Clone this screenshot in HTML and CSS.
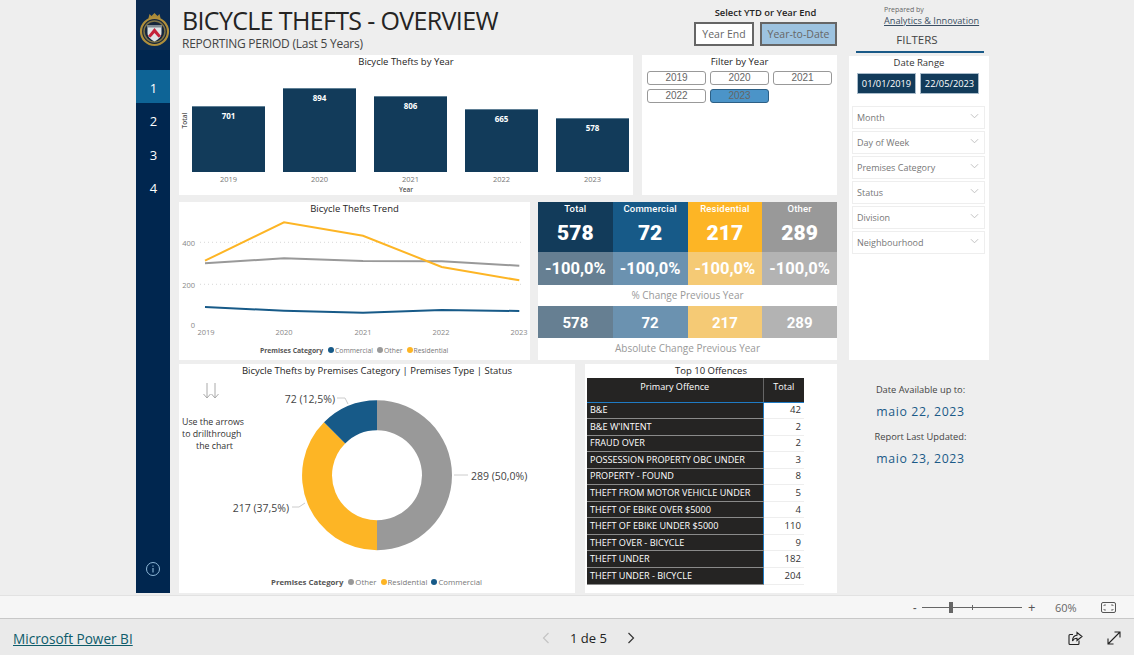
FILE: index.html
```html
<!DOCTYPE html>
<html lang="en">
<head>
    <meta charset="UTF-8">
    <meta name="viewport" content="width=device-width, initial-scale=1.0">
    <title>Bicycle Thefts - Overview</title>
    <link rel="stylesheet" href="styles.css">
</head>
<body>
    <div class="report">
        <nav class="sidebar">
            <div class="logo">
                <svg width="34" height="50" viewBox="0 0 34 50">
                    <path d="M12.500 18 l1-4 l2 2 l3-3 l3 3 l2-2 l1 4 z" fill="#a98a3a"/>
                    <circle cx="18.500" cy="31.500" r="13.500" fill="#16263c" stroke="#b08f3c" stroke-width="2.200"/>
                    <circle cx="18.500" cy="31.500" r="10.500" fill="none" stroke="#7f7345" stroke-width="1.500"/>
                    <path d="M11.500 25 h14 v8 c0 4-3.500 6.500-7 8.500 c-3.500-2-7-4.500-7-8.500 z" fill="#dfe3e6"/>
                    <path d="M11.500 25 h14 v2.500 h-14 z" fill="#7f8a93"/>
                    <path d="M12 36 l6.500-8 l6.500 8 l-2.500 1.500 l-4-4.500 l-4 4.500 z" fill="#c4213a"/>
                </svg>
            </div>
            <div class="nav-list">
                <div class="nav-item active">1</div>
                <div class="nav-item">2</div>
                <div class="nav-item">3</div>
                <div class="nav-item">4</div>
            </div>
            <div class="info">
                <svg width="16" height="16" viewBox="0 0 16 16">
                    <circle cx="8" cy="8" r="6.500" fill="none" stroke="#8fb8d8" stroke-width="1"/>
                    <path d="M8 7 v4.500 M8 4.500 v1.200" stroke="#8fb8d8" stroke-width="1.100"/>
                </svg>
            </div>
        </nav>

        <main class="main">
            <header class="page-header">
                <div class="page-titles">
                    <h1>BICYCLE THEFTS - OVERVIEW</h1>
                    <p>REPORTING PERIOD (Last 5 Years)</p>
                </div>
                <div class="mode-select">
                    <div class="mode-label">Select YTD or Year End</div>
                    <div class="mode-buttons">
                        <div class="mode-btn year-end">Year End</div>
                        <div class="mode-btn ytd">Year-to-Date</div>
                    </div>
                </div>
            </header>

            <section class="row row-one">
                <div class="tile bar-tile">
                    <div class="tile-title">Bicycle Thefts by Year</div>
                    <div class="axis-name-y">Total</div>
                    <div class="bars">
                        <div class="bar" style="height: 66px">701</div>
                        <div class="bar" style="height: 84px">894</div>
                        <div class="bar" style="height: 76px">806</div>
                        <div class="bar" style="height: 63px">665</div>
                        <div class="bar" style="height: 54px">578</div>
                    </div>
                    <div class="bar-years">
                        <span>2019</span><span>2020</span><span>2021</span><span>2022</span><span>2023</span>
                    </div>
                    <div class="axis-name-x">Year</div>
                </div>
                <div class="tile year-filter">
                    <div class="tile-title">Filter by Year</div>
                    <div class="chips">
                        <div class="chip">2019</div>
                        <div class="chip">2020</div>
                        <div class="chip">2021</div>
                        <div class="chip">2022</div>
                        <div class="chip selected">2023</div>
                    </div>
                </div>
            </section>

            <section class="row row-two">
                <div class="tile trend-tile">
                    <div class="tile-title">Bicycle Thefts Trend</div>
                    <svg class="trend-chart" width="351" height="126" viewBox="0 0 351 126">
                        <line class="grid" x1="21" y1="26.300" x2="345" y2="26.300"/>
                        <line class="grid" x1="21" y1="68.300" x2="345" y2="68.300"/>
                        <text class="tick" x="16" y="29.500" text-anchor="end">400</text>
                        <text class="tick" x="16" y="71.500" text-anchor="end">200</text>
                        <text class="tick" x="16" y="112" text-anchor="end">0</text>
                        <polyline class="line" stroke="#999999" points="26,47.300 105,42.300 184,45 262.700,45.300 340.300,49.700"/>
                        <polyline class="line" stroke="#fdb525" points="26,44.700 105,6.300 184,19.700 262.700,51 340.300,64.300"/>
                        <polyline class="line" stroke="#175a88" points="26,91 105,94.700 184,96.700 262.700,94 340.300,95"/>
                        <text class="tick" x="27" y="119" text-anchor="middle">2019</text>
                        <text class="tick" x="105" y="119" text-anchor="middle">2020</text>
                        <text class="tick" x="184" y="119" text-anchor="middle">2021</text>
                        <text class="tick" x="262" y="119" text-anchor="middle">2022</text>
                        <text class="tick" x="340" y="119" text-anchor="middle">2023</text>
                    </svg>
                    <div class="legend">
                        <b>Premises Category</b>
                        <span><i class="dot blue"></i>Commercial</span>
                        <span><i class="dot grey"></i>Other</span>
                        <span><i class="dot amber"></i>Residential</span>
                    </div>
                </div>

                <div class="tile kpi-tile">
                    <div class="kpi-grid">
                        <div class="kpi total"><span>Total</span><strong>578</strong></div>
                        <div class="kpi commercial"><span>Commercial</span><strong>72</strong></div>
                        <div class="kpi residential"><span>Residential</span><strong>217</strong></div>
                        <div class="kpi other"><span>Other</span><strong>289</strong></div>
                        <div class="pct total-soft">-100,0%</div>
                        <div class="pct commercial-soft">-100,0%</div>
                        <div class="pct residential-soft">-100,0%</div>
                        <div class="pct other-soft">-100,0%</div>
                        <div class="kpi-caption">% Change Previous Year</div>
                        <div class="abs total-soft">578</div>
                        <div class="abs commercial-soft">72</div>
                        <div class="abs residential-soft">217</div>
                        <div class="abs other-soft">289</div>
                        <div class="kpi-caption">Absolute Change Previous Year</div>
                    </div>
                </div>
            </section>

            <section class="row row-three">
                <div class="tile donut-tile">
                    <div class="tile-title">Bicycle Thefts by Premises Category | Premises Type | Status</div>
                    <svg class="donut-chart" width="396" height="196" viewBox="0 0 396 196">
                        <path class="arrow" d="M28 5 v15 M24.500 16 l3.500 4 l3.500-4 M36 5 v15 M32.500 16 l3.500 4 l3.500-4"/>
                        <text class="hint" x="3" y="46.500">Use the arrows</text>
                        <text class="hint" x="3" y="59">to drillthrough</text>
                        <text class="hint" x="17" y="71">the chart</text>
                        <path fill="#999999" d="M198 22.300 A75 75 0 0 1 198 172.300 L198 142.300 A45 45 0 0 0 198 52.300 Z"/>
                        <path fill="#fdb525" d="M198 172.300 A75 75 0 0 1 145 44.300 L166.200 65.500 A45 45 0 0 0 198 142.300 Z"/>
                        <path fill="#175a88" d="M145 44.300 A75 75 0 0 1 198 22.300 L198 52.300 A45 45 0 0 0 166.200 65.500 Z"/>
                        <path class="leader" d="M158 20 h8 l3 6 M275 97 h14 M113 129 h7 l6-4"/>
                        <text class="slice-label" x="156" y="25" text-anchor="end">72 (12,5%)</text>
                        <text class="slice-label" x="292" y="102">289 (50,0%)</text>
                        <text class="slice-label" x="110" y="134" text-anchor="end">217 (37,5%)</text>
                    </svg>
                    <div class="legend donut-legend">
                        <b>Premises Category</b>
                        <span><i class="dot grey"></i>Other</span>
                        <span><i class="dot amber"></i>Residential</span>
                        <span><i class="dot blue"></i>Commercial</span>
                    </div>
                </div>

                <div class="tile offences-tile">
                    <div class="tile-title">Top 10 Offences</div>
                    <table class="offences">
                        <thead>
                            <tr><th>Primary Offence</th><th>Total</th></tr>
                        </thead>
                        <tbody>
                            <tr><td>B&amp;E</td><td>42</td></tr>
                            <tr><td>B&amp;E W'INTENT</td><td>2</td></tr>
                            <tr><td>FRAUD OVER</td><td>2</td></tr>
                            <tr><td>POSSESSION PROPERTY OBC UNDER</td><td>3</td></tr>
                            <tr><td>PROPERTY - FOUND</td><td>8</td></tr>
                            <tr><td>THEFT FROM MOTOR VEHICLE UNDER</td><td>5</td></tr>
                            <tr><td>THEFT OF EBIKE OVER $5000</td><td>4</td></tr>
                            <tr><td>THEFT OF EBIKE UNDER $5000</td><td>110</td></tr>
                            <tr><td>THEFT OVER - BICYCLE</td><td>9</td></tr>
                            <tr><td>THEFT UNDER</td><td>182</td></tr>
                            <tr><td>THEFT UNDER - BICYCLE</td><td>204</td></tr>
                        </tbody>
                    </table>
                </div>
            </section>
        </main>

        <aside class="filters">
            <div class="prepared">
                <small>Prepared by</small>
                <a href="#">Analytics &amp; Innovation</a>
            </div>
            <div class="filters-title">FILTERS</div>
            <div class="filters-panel">
                <div class="date-title">Date Range</div>
                <div class="date-boxes">
                    <div class="date-box">01/01/2019</div>
                    <div class="date-box">22/05/2023</div>
                </div>
                <div class="dropdowns">
                    <div class="dropdown">Month<svg class="chevron" viewBox="0 0 10 6"><path d="M1 1 l4 4 l4-4"/></svg></div>
                    <div class="dropdown">Day of Week<svg class="chevron" viewBox="0 0 10 6"><path d="M1 1 l4 4 l4-4"/></svg></div>
                    <div class="dropdown">Premises Category<svg class="chevron" viewBox="0 0 10 6"><path d="M1 1 l4 4 l4-4"/></svg></div>
                    <div class="dropdown">Status<svg class="chevron" viewBox="0 0 10 6"><path d="M1 1 l4 4 l4-4"/></svg></div>
                    <div class="dropdown">Division<svg class="chevron" viewBox="0 0 10 6"><path d="M1 1 l4 4 l4-4"/></svg></div>
                    <div class="dropdown">Neighbourhood<svg class="chevron" viewBox="0 0 10 6"><path d="M1 1 l4 4 l4-4"/></svg></div>
                </div>
            </div>
            <div class="dates">
                <div class="dates-label">Date Available up to:</div>
                <div class="dates-value">maio 22, 2023</div>
                <div class="dates-label">Report Last Updated:</div>
                <div class="dates-value">maio 23, 2023</div>
            </div>
        </aside>
    </div>

    <div class="zoom-bar">
        <span class="zoom-sign">-</span>
        <div class="slider"><i class="slider-tick"></i><i class="slider-thumb"></i></div>
        <span class="zoom-sign plus">+</span>
        <span class="zoom-pct">60%</span>
        <svg class="fit-icon" width="15" height="11" viewBox="0 0 15 11">
            <rect x="0.500" y="0.500" width="14" height="10" rx="1.500" fill="none" stroke="#555"/>
            <path d="M3 4 v-1 h2 M12 4 v-1 h-2 M3 7 v1 h2 M12 7 v1 h-2" fill="none" stroke="#555" stroke-width="0.800"/>
        </svg>
    </div>

    <footer class="footer">
        <a class="brand" href="#">Microsoft Power BI</a>
        <div class="pager">
            <svg width="8" height="12" viewBox="0 0 8 12"><path d="M6.500 1 l-5 5 l5 5" fill="none" stroke="#c4c4c4" stroke-width="1.200"/></svg>
            <span>1 de 5</span>
            <svg width="8" height="12" viewBox="0 0 8 12"><path d="M1.500 1 l5 5 l-5 5" fill="none" stroke="#333" stroke-width="1.200"/></svg>
        </div>
        <div class="footer-icons">
            <svg width="15" height="15" viewBox="0 0 15 15">
                <path d="M5 3.500 h-3 a1 1 0 0 0-1 1 v8 a1 1 0 0 0 1 1 h8 a1 1 0 0 0 1-1 v-3" fill="none" stroke="#222" stroke-width="1.100"/>
                <path d="M9 1.500 l5 4 l-5 4 v-2.300 c-2 0-3.500 .800-4.500 2.800 c0-3.500 1.800-5.500 4.500-5.800 z" fill="none" stroke="#222" stroke-width="1.100"/>
            </svg>
            <svg width="14" height="14" viewBox="0 0 14 14">
                <path d="M1 13 L13 1 M7.500 1 h5.500 v5.500 M1 7.500 v5.500 h5.500" fill="none" stroke="#222" stroke-width="1.100"/>
            </svg>
        </div>
    </footer>
</body>
</html>
```

FILE: styles.css
```css
body {
    font-family: "Open Sans", "Noto Sans", sans-serif;
    background-color: #eeeeee;
    margin: 0;
    padding: 0;
    height: 655px;
    color: #333;
    overflow: hidden;
    display: flex;
    flex-direction: column;
}

.report {
    height: 595px;
    padding-left: 136px;
    display: flex;
    align-items: flex-start;
}

/* Left navigation */
.sidebar {
    width: 34px;
    height: 593px;
    background-color: #00264f;
    display: flex;
    flex-direction: column;
    color: white;
}

.logo {
    height: 50px;
    background-color: #0a2a50;
}

.logo svg {
    display: block;
}

.nav-list {
    margin-top: 20px;
}

.nav-item {
    height: 33.4px;
    line-height: 36px;
    padding-left: 1px;
    text-align: center;
    font-size: 13px;
}

.nav-item.active {
    background-color: #0e6496;
}

.info {
    margin-top: auto;
    margin-bottom: 17px;
    text-align: center;
    height: 16px;
}

/* Middle column */
.main {
    width: 658px;
    margin-left: 9px;
    display: flex;
    flex-direction: column;
}

.page-header {
    height: 55px;
    display: flex;
    justify-content: space-between;
}

.page-titles {
    padding-left: 3px;
}

.page-titles h1 {
    margin: 6px 0 0;
    font-size: 25px;
    line-height: 28px;
    letter-spacing: -0.650px;
    font-weight: 400;
    color: #252423;
}

.page-titles p {
    margin: 2px 0 0;
    font-size: 12px;
    line-height: 15px;
    letter-spacing: -0.250px;
    color: #444;
}

.mode-select {
    width: 143px;
}

.mode-label {
    margin-top: 6px;
    height: 16px;
    line-height: 14px;
    text-align: center;
    font-size: 9.400px;
    font-weight: 600;
    color: #252423;
}

.mode-buttons {
    display: flex;
    gap: 6px;
}

.mode-btn {
    height: 24px;
    line-height: 20px;
    box-sizing: border-box;
    border: 2px solid #666;
    font-size: 10.500px;
    text-align: center;
    color: #666;
}

.year-end {
    width: 60px;
    background-color: white;
}

.ytd {
    width: 77px;
    background-color: #9dc3e0;
}

.row {
    display: flex;
}

.row-one {
    height: 140px;
    gap: 9px;
    margin-bottom: 7px;
}

.row-two {
    height: 158px;
    gap: 8px;
    margin-bottom: 4px;
}

.row-three {
    height: 229px;
    gap: 10px;
}

.tile {
    background-color: white;
    position: relative;
}

.tile-title {
    height: 14px;
    line-height: 14px;
    text-align: center;
    font-size: 9.500px;
    color: #252423;
}

/* Bar chart */
.bar-tile {
    width: 454px;
}

.bars {
    height: 103px;
    padding-left: 13px;
    display: flex;
    align-items: flex-end;
    gap: 18px;
}

.bar {
    width: 73px;
    box-sizing: border-box;
    background-color: #123b5a;
    border-top: 1px solid #5f7f95;
    color: white;
    text-align: center;
    font-size: 8px;
    font-weight: 700;
    padding-top: 3px;
}

.bar-years {
    padding-left: 13px;
    display: flex;
    gap: 18px;
    margin-top: 2px;
}

.bar-years span {
    width: 73px;
    text-align: center;
    font-size: 7.500px;
    line-height: 10px;
    color: #777;
}

.axis-name-x {
    text-align: center;
    font-size: 6.500px;
    font-weight: 600;
    line-height: 10px;
    margin-top: 1px;
    color: #555;
}

.axis-name-y {
    position: absolute;
    left: 0;
    top: 63px;
    width: 11px;
    text-align: center;
    font-size: 6.500px;
    font-weight: 600;
    line-height: 10px;
    color: #555;
    transform: rotate(-90deg);
}

/* Year slicer */
.year-filter {
    width: 195px;
}

.tile-title + .chips {
    margin-top: 2px;
}

.chips {
    padding-left: 5px;
    display: grid;
    grid-template-columns: repeat(3, 59px);
    grid-auto-rows: 14px;
    gap: 4px;
}

.chip {
    box-sizing: border-box;
    border: 1px solid #999;
    border-radius: 3px;
    font-family: "Liberation Sans", Arial, sans-serif;
    font-size: 10px;
    line-height: 12px;
    text-align: center;
    color: #666;
}

.chip.selected {
    background-color: #4b94c8;
    border-color: #2c5f85;
}

/* Trend */
.trend-tile {
    width: 351px;
}

.trend-chart {
    display: block;
}

.grid {
    stroke: #d8d8d8;
    stroke-width: 1;
    stroke-dasharray: 1 3;
}

.tick {
    font-size: 7.500px;
    fill: #888;
}

.line {
    fill: none;
    stroke-width: 2;
}

.legend {
    margin-top: 1px;
    padding-left: 81px;
    display: flex;
    align-items: center;
    gap: 3px;
    height: 14px;
    font-size: 6.800px;
    color: #777;
}

.legend b {
    color: #555;
    margin-right: 2px;
}

.legend span {
    display: flex;
    align-items: center;
    margin-right: 1px;
}

.dot {
    width: 6px;
    height: 6px;
    border-radius: 50%;
    margin-right: 1px;
}

.dot.blue {
    background-color: #175a88;
}

.dot.grey {
    background-color: #999999;
}

.dot.amber {
    background-color: #fdb525;
}

/* KPI cards */
.kpi-tile {
    width: 299px;
}

.kpi-grid {
    display: grid;
    grid-template-columns: repeat(4, 1fr);
    grid-template-rows: 50px 33px 21px 32px 22px;
    height: 158px;
    color: white;
    font-family: Roboto, sans-serif;
    font-weight: 700;
    text-align: center;
}

.kpi {
    display: flex;
    flex-direction: column;
    align-items: center;
}

.kpi span {
    font-size: 9.500px;
    line-height: 14px;
    letter-spacing: 0.200px;
    font-weight: 500;
}

.kpi strong {
    font-size: 21px;
    line-height: 33px;
    margin-top: 1px;
}

.kpi.total {
    background-color: #123b5a;
}

.kpi.commercial {
    background-color: #175a88;
}

.kpi.residential {
    background-color: #fdb525;
}

.kpi.other {
    background-color: #999999;
}

.total-soft {
    background-color: #667f92;
}

.commercial-soft {
    background-color: #6b92b0;
}

.residential-soft {
    background-color: #f5ca75;
}

.other-soft {
    background-color: #b3b3b3;
}

.pct {
    font-size: 16.500px;
    line-height: 33px;
}

.abs {
    font-size: 15px;
    line-height: 35px;
    overflow: hidden;
}

.kpi-caption {
    grid-column: 1 / -1;
    font-family: "Open Sans", sans-serif;
    font-weight: 400;
    font-size: 10px;
    line-height: 21px;
    color: #999;
}

/* Donut */
.donut-tile {
    width: 396px;
}

.donut-chart {
    display: block;
}

.arrow {
    fill: none;
    stroke: #aaa;
    stroke-width: 1;
}

.hint {
    font-size: 8.800px;
    fill: #333;
}

.leader {
    fill: none;
    stroke: #ccc;
    stroke-width: 1;
}

.slice-label {
    font-size: 10.500px;
    fill: #444;
}

.donut-legend {
    padding-left: 92px;
    font-size: 7.800px;
}

/* Offences table */
.offences-tile {
    width: 252px;
}

.offences {
    margin-left: 2px;
    width: 217px;
    border-collapse: collapse;
    table-layout: fixed;
    font-size: 9.100px;
}

.offences th {
    height: 24px;
    box-sizing: border-box;
    padding: 0 0 6px;
    background-color: #252423;
    color: white;
    font-weight: 400;
    border-bottom: 1px solid #1f7bc4;
    border-right: 1px solid #666;
}

.offences th:first-child {
    width: 176px;
}

.offences th:last-child {
    border-right: none;
}

.offences td {
    height: 16.550px;
    padding: 0 3px;
    box-sizing: border-box;
    line-height: 14px;
    white-space: nowrap;
}

.offences td:first-child {
    background-color: #252423;
    color: white;
    border-bottom: 1px solid #8a8a8a;
    border-right: 1px solid #1f7bc4;
}

.offences td:last-child {
    text-align: right;
    font-size: 9.600px;
    border-bottom: 1px solid #eeeeee;
}

/* Right column */
.filters {
    width: 140px;
    margin-left: 12px;
    display: flex;
    flex-direction: column;
}

.prepared {
    height: 33px;
    padding: 5px 0 0 35px;
    box-sizing: border-box;
}

.prepared small {
    display: block;
    font-size: 7px;
    line-height: 9px;
    color: #666;
}

.prepared a {
    display: block;
    font-size: 9.200px;
    line-height: 13px;
    color: #3a4f63;
    white-space: nowrap;
}

.filters-title {
    margin: 0 5px 0 7px;
    padding-right: 6px;
    height: 20px;
    box-sizing: border-box;
    border-bottom: 2px solid #1a5a88;
    line-height: 14px;
    font-size: 11.500px;
    text-align: center;
    color: #444;
}

.filters-panel {
    margin-top: 3px;
    height: 304px;
    background-color: white;
}

.date-title {
    height: 17px;
    line-height: 14px;
    text-align: center;
    font-size: 9.500px;
}

.date-boxes {
    padding-left: 8px;
    display: flex;
    gap: 4px;
}

.date-box {
    width: 59px;
    height: 21px;
    box-sizing: border-box;
    border: 1px solid #a9bccb;
    background-color: #123b5a;
    color: white;
    font-size: 9.300px;
    line-height: 19px;
    text-align: center;
}

.dropdowns {
    margin: 12px 4px 0 3px;
    display: flex;
    flex-direction: column;
    gap: 2px;
}

.dropdown {
    height: 23px;
    box-sizing: border-box;
    border: 1.500px solid #eeeeee;
    padding: 0 5px 0 4px;
    display: flex;
    align-items: center;
    justify-content: space-between;
    font-size: 9px;
    color: #777;
}

.chevron {
    width: 9px;
    height: 6px;
    margin-bottom: 3px;
}

.chevron path {
    fill: none;
    stroke: #bbb;
    stroke-width: 1;
}

.dates {
    margin-top: 23px;
    text-align: center;
    padding-left: 3px;
}

.dates-label {
    font-size: 9.300px;
    line-height: 14px;
    color: #444;
}

.dates-value {
    font-size: 12.300px;
    line-height: 18px;
    letter-spacing: 0.600px;
    color: #1a5a88;
    margin: 6px 0 9px;
}

/* Bottom bars */
.zoom-bar {
    height: 22px;
    background-color: #f6f6f6;
    border-top: 1px solid #e2e2e2;
    border-bottom: 1px solid #c8c8c8;
    display: flex;
    align-items: center;
    padding-left: 913px;
    font-size: 11px;
    color: #555;
}

.zoom-sign {
    width: 9px;
    font-weight: 600;
}

.zoom-sign.plus {
    width: 27px;
    margin-left: 6px;
    font-size: 13px;
    font-weight: 400;
}

.slider {
    width: 100px;
    height: 1px;
    background-color: #666;
    position: relative;
}

.slider-tick {
    position: absolute;
    left: 50px;
    top: -2px;
    width: 1px;
    height: 5px;
    background-color: #666;
}

.slider-thumb {
    position: absolute;
    left: 27px;
    top: -5px;
    width: 4px;
    height: 11px;
    background-color: #666;
}

.zoom-pct {
    width: 46px;
    font-size: 11px;
    color: #666;
}

.fit-icon {
    display: block;
}

.footer {
    flex: 1;
    background-color: #eaeaea;
    display: grid;
    grid-template-columns: 529px auto 1fr;
    align-items: center;
    padding: 2px 13px 0;
}

.brand {
    font-size: 13.600px;
    color: #0e5c6a;
}

.pager {
    display: flex;
    align-items: center;
    gap: 20px;
    font-size: 13px;
    color: #222;
}

.footer-icons {
    display: flex;
    justify-content: flex-end;
    gap: 24px;
}
```
